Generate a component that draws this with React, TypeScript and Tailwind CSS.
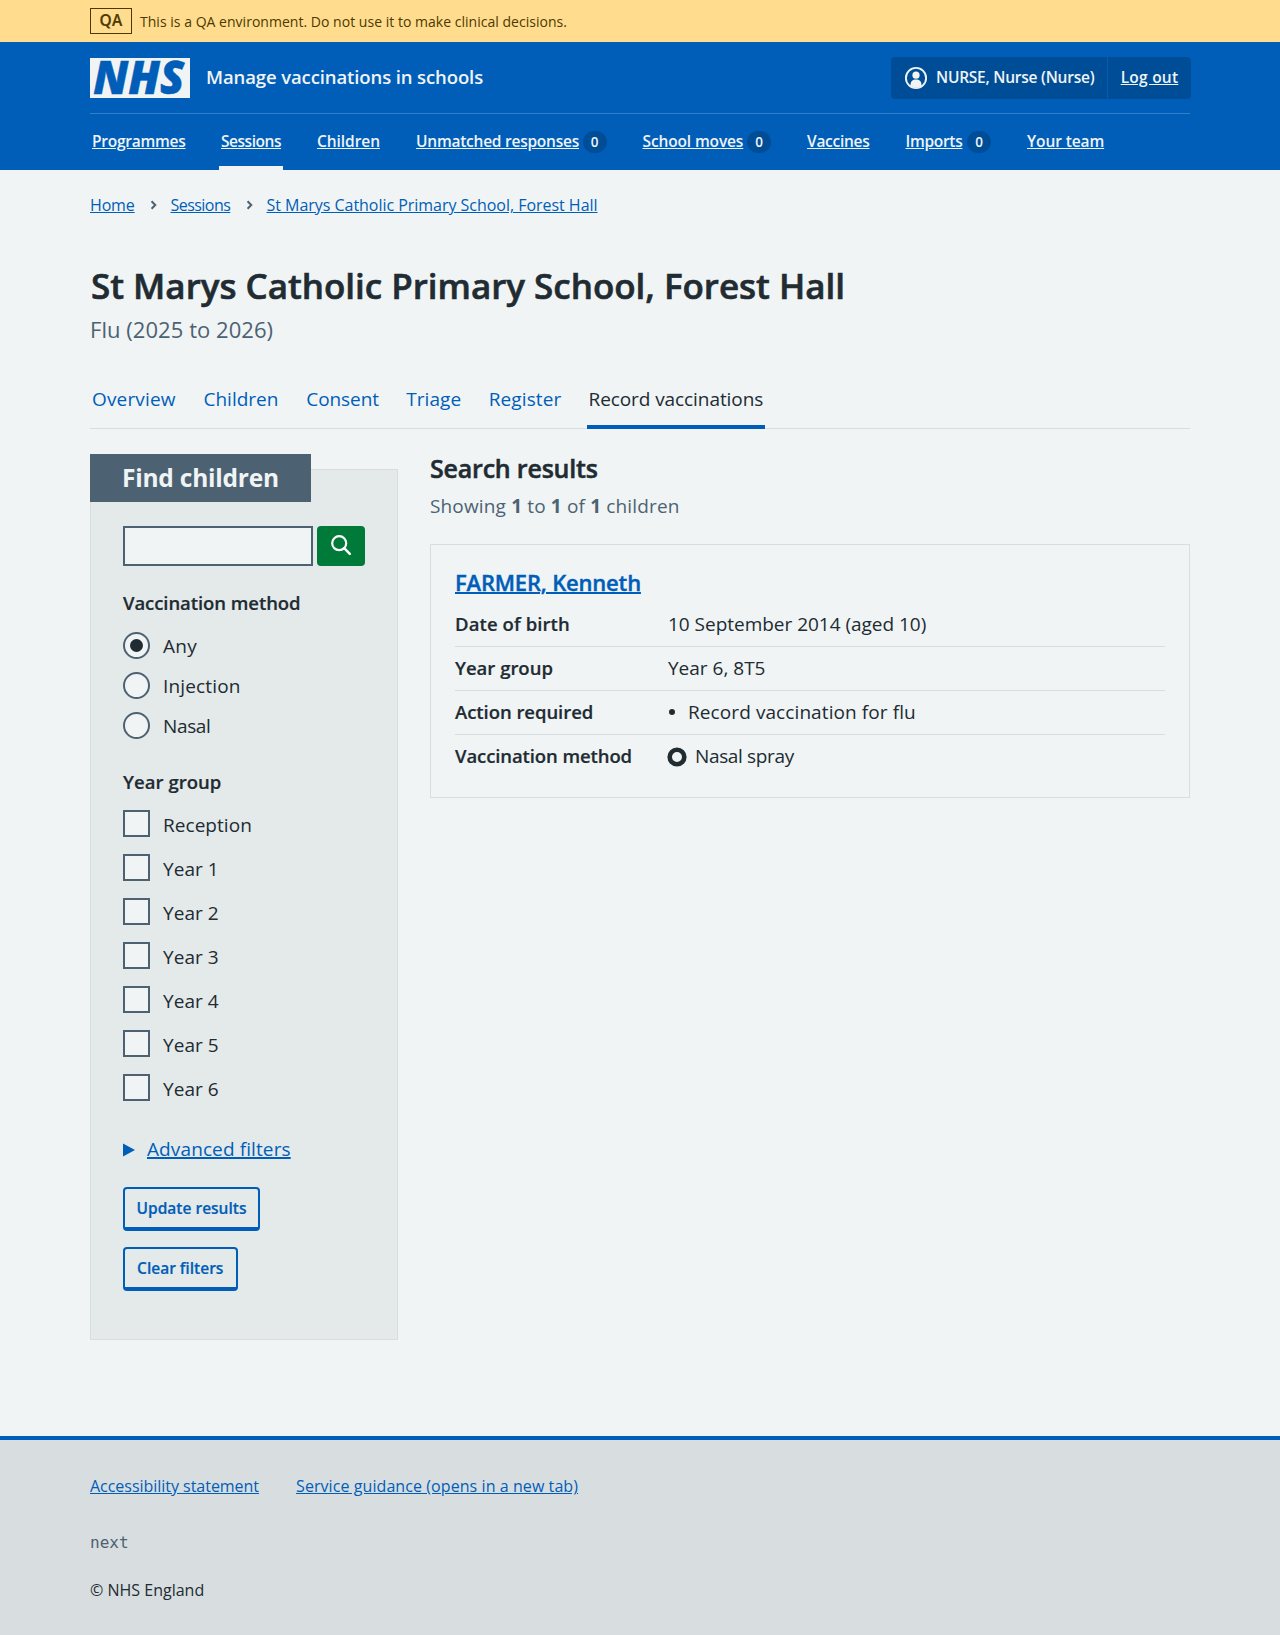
import type { ReactNode } from "react";

type NavItem = { label: string; width: string; tracking: string; count?: number; current?: boolean };

const navItems: NavItem[] = [
  { label: "Programmes", width: "w-[97px]", tracking: "tracking-[-0.25px]" },
  { label: "Sessions", width: "w-[64px]", tracking: "tracking-[-0.46px]", current: true },
  { label: "Children", width: "w-[67px]", tracking: "tracking-[-0.06px]" },
  { label: "Unmatched responses", width: "w-[194.5px]", tracking: "tracking-[-0.24px]", count: 0 },
  { label: "School moves", width: "w-[132.5px]", tracking: "tracking-[-0.13px]", count: 0 },
  { label: "Vaccines", width: "w-[66.5px]", tracking: "tracking-[-0.28px]" },
  { label: "Imports", width: "w-[89.5px]", tracking: "tracking-[-0.3px]", count: 0 },
  { label: "Your team", width: "w-[82px]", tracking: "tracking-[-0.1px]" },
];

const tabs = [
  { label: "Overview", style: "w-[87.5px] tracking-[0.15px]" },
  { label: "Children", style: "w-[78.75px]" },
  { label: "Consent", style: "w-[76px] tracking-[-0.06px]" },
  { label: "Triage", style: "w-[58.5px] tracking-[0.05px]" },
  { label: "Register", style: "w-[76.25px] tracking-[0.1px]" },
];

const methods = [
  { label: "Any", checked: true, style: "tracking-[0.3px]" },
  { label: "Injection", checked: false, style: "tracking-[0.15px]" },
  { label: "Nasal", checked: false, style: "tracking-[-0.35px]" },
];

const years = ["Reception", "Year 1", "Year 2", "Year 3", "Year 4", "Year 5", "Year 6"];

function NhsLogo() {
  return (
    <svg width="100" height="40" viewBox="0 0 100 40" className="block shrink-0 overflow-visible" role="img" aria-label="NHS">
      <rect width="100" height="40" fill="#f0f4f5" />
      <text
        x="3.3"
        y="36.4"
        fontFamily="Open Sans, sans-serif"
        fontSize="46"
        fontWeight="800"
        fontStyle="italic"
        fill="#005eb8"
        stroke="#005eb8"
        strokeWidth="0.5"
        textLength="91"
        lengthAdjust="spacingAndGlyphs"
      >
        NHS
      </text>
    </svg>
  );
}

function UserIcon() {
  return (
    <svg width="24" height="24" viewBox="0 0 24 24" className="shrink-0" aria-hidden="true">
      <circle cx="12" cy="12" r="10.1" fill="none" stroke="#f0f4f5" strokeWidth="1.9" />
      <circle cx="12" cy="9.2" r="3.6" fill="#f0f4f5" />
      <path d="M12 13.6c3.3 0 5.4 2 5.4 4.6v1.9a10 10 0 0 1-10.8 0v-1.9c0-2.6 2.1-4.6 5.4-4.6Z" fill="#f0f4f5" />
    </svg>
  );
}

function Chevron() {
  return (
    <svg viewBox="0 0 8 12" className="mr-[13.5px] ml-[15.5px] h-3 w-[7px] shrink-0" aria-hidden="true">
      <path d="M1.8 1.8l4.2 4.2-4.2 4.2" fill="none" stroke="#4c6272" strokeWidth="2.3" />
    </svg>
  );
}

function Row({ label, last, labelStyle = "", children }: { label: string; last?: boolean; labelStyle?: string; children: ReactNode }) {
  return (
    <div className={`flex h-11 pt-[9px] text-[19px] leading-6 ${last ? "" : "border-b border-[#d8dde0]"}`}>
      <dt className={`w-[213px] shrink-0 text-[18.5px] font-semibold [-webkit-text-stroke:0.2px] ${labelStyle}`}>{label}</dt>
      <dd className="flex whitespace-nowrap">{children}</dd>
    </div>
  );
}

function SecondaryButton({ children, className }: { children: ReactNode; className: string }) {
  return (
    <button
      type="button"
      className={`flex h-11 items-center justify-center rounded-[4px] border-2 border-b-4 border-[#005eb8] pt-0.5 text-[15.5px] font-semibold whitespace-nowrap text-[#005eb8] [-webkit-text-stroke:0.2px] ${className}`}
    >
      {children}
    </button>
  );
}

export default function App() {
  return (
    <div className="min-h-[1635px] bg-[#f0f4f5] font-['Open_Sans','Noto_Sans',sans-serif] text-[#212b32]">
      <div className="flex h-[42px] items-center bg-[#ffdc8e] px-[90px] text-[#4d3a00]">
        <strong className="flex h-[26px] w-[42px] items-center justify-center border border-[#4d3a00] text-[15.5px] font-semibold tracking-[0.4px] [-webkit-text-stroke:0.2px]">
          QA
        </strong>
        <span className="ml-2 text-[14px] tracking-[0.024px]">
          This is a QA environment. Do not use it to make clinical decisions.
        </span>
      </div>

      <header className="h-32 bg-[#005eb8] px-[90px] font-semibold text-[#f0f4f5]">
        <div className="flex h-[72px] items-center border-b border-white/20 pt-px">
          <NhsLogo />
          <span className="ml-[16px] pb-0.5 text-[18.5px] tracking-[-0.11px]">Manage vaccinations in schools</span>
          <div className="-mr-px ml-auto flex h-[42px] w-[300px] items-stretch rounded-[4px] bg-[#004d97] text-[15.5px] whitespace-nowrap">
            <div className="flex w-[217px] items-center border-r border-[#005eb8] pl-[13px]">
              <UserIcon />
              <span className="ml-2 tracking-[-0.24px]">NURSE, Nurse (Nurse)</span>
            </div>
            <a className="flex flex-1 items-center justify-center tracking-[0.25px] underline underline-offset-[1px]">
              Log out
            </a>
          </div>
        </div>
        <nav className="flex h-14 gap-8 text-[15.5px] whitespace-nowrap">
          {navItems.map((item) => (
            <a
              key={item.label}
              className={`flex h-full items-center px-0.5 ${item.width} ${item.current ? "border-b-4 border-[#f0f4f5] pt-1" : ""}`}
            >
              <span className={`underline underline-offset-[1px] ${item.tracking}`}>{item.label}</span>
              {item.count !== undefined && (
                <span className="ml-auto flex h-[22px] w-6 items-center justify-center rounded-full bg-[#004d97] text-[13.5px]">
                  {item.count}
                </span>
              )}
            </a>
          ))}
        </nav>
      </header>

      <main className="px-[90px] pb-24">
        <nav className="flex items-center pt-[23px] text-[16px] leading-6 whitespace-nowrap text-[#005eb8]">
          <a className="w-[44.5px] tracking-[-0.15px] underline underline-offset-[1px]">Home</a>
          <Chevron />
          <a className="w-[60px] tracking-[-0.54px] underline underline-offset-[1px]">Sessions</a>
          <Chevron />
          <a className="tracking-[-0.03px] underline underline-offset-[1px]">St Marys Catholic Primary School, Forest Hall</a>
        </nav>

        <h1 className="mt-[47px] ml-px text-[35px] leading-[44px] font-semibold tracking-[-0.02px] [-webkit-text-stroke:0.6px]">
          St Marys Catholic Primary School, Forest Hall
        </h1>
        <p className="mt-[5px] text-[22px] leading-8 tracking-[0.05px] text-[#4c6272]">Flu (2025 to 2026)</p>

        <nav className="mt-[35px] flex h-[49px] gap-6 border-b border-[#d8dde0] text-[19px] leading-6 whitespace-nowrap text-[#005eb8]">
          {tabs.map((tab) => (
            <a key={tab.label} className={`px-0.5 pt-[7px] ${tab.style}`}>
              {tab.label}
            </a>
          ))}
          <a className="h-[49px] w-[178px] border-b-4 border-[#005eb8] pt-[7px] pl-[1.5px] tracking-[-0.08px] text-[#212b32]">
            Record vaccinations
          </a>
        </nav>

        <div className="flex items-start gap-8">
          <aside className="mt-10 h-[871px] w-[308px] shrink-0 border border-[#d8dde0] bg-[#e4e9e9] px-8">
            <h2 className="-mt-4 -ml-[33px] flex h-12 w-[221px] items-center bg-[#4c6272] pl-8 text-[24.5px] font-bold tracking-[-0.22px] text-[#f0f4f5]">
              Find children
            </h2>
            <div className="mt-6 flex gap-1">
              <input className="h-10 w-[190px] border-2 border-[#4c6272] bg-[#f0f4f5]" aria-label="Search" />
              <button type="button" className="flex h-10 w-[47.5px] items-center justify-center rounded-[4px] bg-[#007a38] pb-[3px] pl-px" aria-label="Search">
                <svg width="24" height="24" viewBox="0 0 24 24" aria-hidden="true">
                  <circle cx="10.2" cy="10.2" r="7" fill="none" stroke="#fff" strokeWidth="2.2" />
                  <path d="M15.2 15.2l5.6 5.6" stroke="#fff" strokeWidth="2.5" strokeLinecap="round" />
                </svg>
              </button>
            </div>

            <h3 className="mt-[25px] text-[18.5px] leading-6 font-semibold tracking-[-0.07px] [-webkit-text-stroke:0.2px]">Vaccination method</h3>
            <div className="mt-2.5">
              {methods.map((m) => (
                <label key={m.label} className="flex h-10 items-center text-[19px] leading-6">
                  <span className="flex h-[27px] w-[27px] items-center justify-center rounded-full border-2 border-[#4c6272] bg-[#f0f4f5]">
                    {m.checked && <span className="h-[13px] w-[13px] rounded-full bg-[#212b32]" />}
                  </span>
                  <span className={`ml-[13px] pt-0.5 ${m.style}`}>{m.label}</span>
                </label>
              ))}
            </div>

            <h3 className="mt-[25px] text-[18.5px] leading-6 font-semibold tracking-[0.05px] [-webkit-text-stroke:0.2px]">Year group</h3>
            <div className="mt-2">
              {years.map((y) => (
                <label key={y} className="flex h-11 items-center text-[19px] leading-6 tracking-[0.05px]">
                  <span className="-mt-px h-[27px] w-[27px] border-2 border-[#4c6272] bg-[#f0f4f5]" />
                  <span className="ml-[13px] pt-0.5">{y}</span>
                </label>
              ))}
            </div>

            <div className="mt-[27px] flex items-center text-[19px] leading-6 text-[#005eb8]">
              <svg width="12" height="14" viewBox="0 0 12 14" className="mt-px shrink-0" aria-hidden="true">
                <path d="M0 0.5l12 6.5-12 6.5z" fill="#005eb8" />
              </svg>
              <a className="ml-3 tracking-[0.11px] underline decoration-2 underline-offset-[1px]">Advanced filters</a>
            </div>
            <SecondaryButton className="mt-[26px] w-[137px]">Update results</SecondaryButton>
            <SecondaryButton className="mt-4 w-[114.5px]">Clear filters</SecondaryButton>
          </aside>

          <section className="min-w-0 flex-1">
            <h2 className="mt-[23px] text-[25px] leading-8 font-semibold tracking-[-0.2px] [-webkit-text-stroke:0.5px]">Search results</h2>
            <p className="mt-2.5 text-[19px] leading-6 tracking-[0.15px] text-[#4c6272]">
              Showing <b className="font-bold">1</b> to <b className="font-bold">1</b> of <b className="font-bold">1</b> children
            </p>
            <article className="mt-[26px] h-[254px] border border-[#d8dde0] px-6 pt-[23px]">
              <h3 className="text-[22px] leading-7 font-semibold tracking-[-0.18px] text-[#005eb8] [-webkit-text-stroke:0.4px]">
                <a className="underline decoration-2 underline-offset-[1px]">FARMER, Kenneth</a>
              </h3>
              <dl className="mt-[7px]">
                <Row label="Date of birth" labelStyle="tracking-[0.1px]">
                  <span className="tracking-[-0.02px]">10 September 2014 (aged 10)</span>
                </Row>
                <Row label="Year group">Year 6, 8T5</Row>
                <Row label="Action required" labelStyle="tracking-[-0.05px]">
                  <ul className="list-none">
                    <li className="flex items-center tracking-[0.09px]">
                      <span className="mr-[13px] ml-px h-1.5 w-1.5 rounded-full bg-[#212b32]" />
                      Record vaccination for flu
                    </li>
                  </ul>
                </Row>
                <Row label="Vaccination method" last labelStyle="tracking-[-0.1px]">
                  <svg width="20" height="20" viewBox="0 0 20 20" className="mt-[3px] mr-2 -ml-px" aria-hidden="true">
                    <circle cx="10" cy="10" r="7.3" fill="none" stroke="#212b32" strokeWidth="4.6" />
                  </svg>
                  <span className="tracking-[-0.35px]">Nasal spray</span>
                </Row>
              </dl>
            </article>
          </section>
        </div>
      </main>

      <footer className="h-[199px] border-t-4 border-[#005eb8] bg-[#d8dde0] px-[90px] pt-[34px] text-[16px] leading-6">
        <div className="flex gap-[37px] text-[#005eb8]">
          <a className="tracking-[-0.03px] underline underline-offset-[1px]">Accessibility statement</a>
          <a className="tracking-[0.076px] underline underline-offset-[1px]">Service guidance (opens in a new tab)</a>
        </div>
        <p className="mt-[33px] font-['DejaVu_Sans_Mono',monospace] text-[#4c6272]">next</p>
        <p className="mt-[23px]">© NHS England</p>
      </footer>
    </div>
  );
}
